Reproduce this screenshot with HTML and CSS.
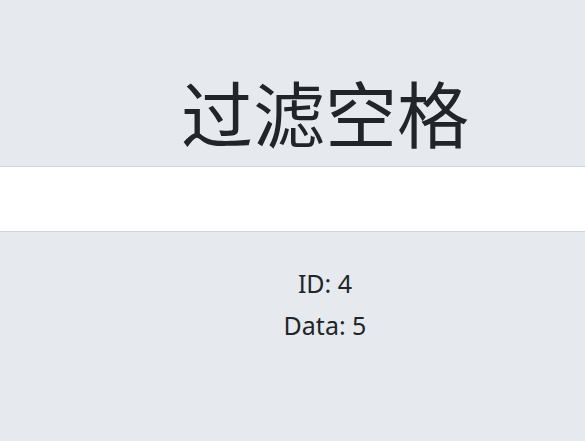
FILE: index.html
```html
<!DOCTYPE html>
<html lang="zh">
<head>
<meta charset="utf-8">
<link rel="stylesheet" href="styles.css">
</head>
<body>
<div class="page">
  <h1 class="title">过滤空格</h1>
  <input class="field" type="text">
  <div class="info">
    <div class="line">ID: 4</div>
    <div class="line">Data: 5</div>
  </div>
</div>
</body>
</html>
```
FILE: styles.css
```css
html, body {
  margin: 0;
  padding: 0;
  background: #e6eaee;
}
.page {
  font-family: "Noto Sans", "Noto Sans CJK SC", sans-serif;
  color: #212529;
  text-align: center;
}
.title {
  margin: 0;
  height: 166px;
  display: flex;
  align-items: flex-end;
  justify-content: center;
  font-family: "Noto Sans CJK SC", sans-serif;
  font-weight: 400;
  font-size: 72px;
  line-height: 1.2;
  padding: 0 0 12px 65px;
  box-sizing: border-box;
}
.field {
  display: block;
  box-sizing: border-box;
  width: 100%;
  height: 66px;
  margin: 0;
  border: 1px solid #ced4da;
  border-left: none;
  border-right: none;
  background: #fff;
  outline: none;
}
.info {
  padding: 30px 0 0 65px;
}
.line {
  font-size: 25px;
  line-height: 42px;
}
```
